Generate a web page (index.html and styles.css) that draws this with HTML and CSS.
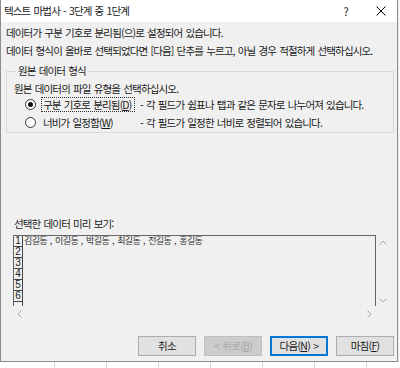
FILE: index.html
```html
<!DOCTYPE html>
<html lang="ko">
<head>
<meta charset="utf-8">
<title>텍스트 마법사</title>
<link rel="stylesheet" href="styles.css">
</head>
<body>
<div class="window">
  <div class="titlebar">
    <span class="title">텍스트 마법사 - 3단계 중 1단계</span>
    <span class="help">?</span>
    <span class="close"><svg width="10" height="10" viewBox="0 0 10 10"><path d="M0.5 0.5L9.5 9.5M9.5 0.5L0.5 9.5" stroke="#000" stroke-width="1" fill="none"/></svg></span>
  </div>
  <div class="content">
    <div class="line">데이터가 구분 기호로 분리됨(으)로 설정되어 있습니다.</div>
    <div class="line">데이터 형식이 올바로 선택되었다면 [다음] 단추를 누르고, 아닐 경우 적절하게 선택하십시오.</div>
    <fieldset class="group">
      <legend>원본 데이터 형식</legend>
      <div class="prompt">원본 데이터의 파일 유형을 선택하십시오.</div>
      <div class="opt">
        <span class="radio checked"></span>
        <span class="label focus">구분 기호로 분리됨(<u>D</u>)</span>
        <span class="desc">- 각 필드가 쉼표나 탭과 같은 문자로 나누어져 있습니다.</span>
      </div>
      <div class="opt">
        <span class="radio"></span>
        <span class="label">너비가 일정함(<u>W</u>)</span>
        <span class="desc">- 각 필드가 일정한 너비로 정렬되어 있습니다.</span>
      </div>
    </fieldset>
    <div class="preview-label">선택한 데이터 미리 보기:</div>
    <div class="preview">
      <div class="data">
        <div class="row"><span class="num">1</span><span class="txt">김길동<span class="c">,</span>이길동<span class="c">,</span>박길동<span class="c">,</span>최길동<span class="c">,</span>전길동<span class="c">,</span>홍길동</span></div>
        <div class="row"><span class="num">2</span><span class="txt"></span></div>
        <div class="row"><span class="num">3</span><span class="txt"></span></div>
        <div class="row"><span class="num">4</span><span class="txt"></span></div>
        <div class="row"><span class="num">5</span><span class="txt"></span></div>
        <div class="row"><span class="num">6</span><span class="txt"></span></div>
        <div class="row"><span class="num"></span><span class="txt"></span></div>
      </div>
      <div class="vscroll">
        <svg width="8" height="5" viewBox="0 0 8 5"><polyline points="0.5,4.5 4,1 7.5,4.5" fill="none" stroke="#a6a6a6" stroke-width="1"/></svg>
        <svg width="8" height="5" viewBox="0 0 8 5"><polyline points="0.5,0.5 4,4 7.5,0.5" fill="none" stroke="#a6a6a6" stroke-width="1"/></svg>
      </div>
      <div class="hscroll">
        <svg width="5" height="8" viewBox="0 0 5 8"><polyline points="4.5,0.5 1,4 4.5,7.5" fill="none" stroke="#a6a6a6" stroke-width="1"/></svg>
        <svg width="5" height="8" viewBox="0 0 5 8"><polyline points="0.5,0.5 4,4 0.5,7.5" fill="none" stroke="#a6a6a6" stroke-width="1"/></svg>
      </div>
      <div class="corner"></div>
    </div>
    <div class="buttons">
      <button class="btn">취소</button>
      <button class="btn disabled">&lt; 뒤로(<u>B</u>)</button>
      <button class="btn default">다음(<u>N</u>) &gt;</button>
      <button class="btn">마침(<u>F</u>)</button>
    </div>
  </div>
</div>
<div class="sheet"></div>
</body>
</html>
```
FILE: styles.css
```css
* { box-sizing: border-box; }
html, body { margin: 0; padding: 0; }
body {
  width: 400px;
  height: 368px;
  background: #ffffff;
  overflow: hidden;
  font-family: "Noto Sans CJK KR", "Noto Sans", sans-serif;
  font-size: 10.5px;
  letter-spacing: -0.85px;
  word-spacing: 1px;
  color: #1a1a1a;
}
.window {
  width: 398px;
  height: 362px;
  border: 1px solid #8c8c8c;
  border-top: none;
  background: #f0f0f0;
  display: flex;
  flex-direction: column;
  box-shadow: 0 1px 2px rgba(0,0,0,0.25);
}
.titlebar {
  height: 22px;
  background: #ffffff;
  display: flex;
  align-items: center;
  padding-left: 3px;
  flex: none;
}
.title { flex: 1; line-height: 20px; }
.help { width: 10px; text-align: center; margin-right: 25px; font-size: 11px; letter-spacing: 0; }
.close { width: 10px; height: 10px; margin-right: 11px; display: flex; }
.content {
  padding: 2px 3px 0 5px;
  flex: 1;
  display: flex;
  flex-direction: column;
}
.line { height: 18px; line-height: 18px; white-space: nowrap; }
.group {
  margin: 4px 0 0 0;
  padding: 4px 0 1px 7px;
  border: 1px solid #dadada;
  height: 69px;
  min-width: 0;
}
.group legend {
  padding: 0 2px;
  margin-left: 2px;
  line-height: 14px;
  height: 14px;
}
.prompt { height: 13px; line-height: 13px; }
.opt {
  height: 18px;
  display: flex;
  align-items: center;
  white-space: nowrap;
}
.radio {
  width: 11px;
  height: 11px;
  border: 1px solid #333;
  border-radius: 50%;
  background: #fff;
  margin-left: 11px;
  margin-right: 6px;
  display: flex;
  align-items: center;
  justify-content: center;
  flex: none;
}
.radio.checked::after {
  content: "";
  width: 5px;
  height: 5px;
  border-radius: 50%;
  background: #111;
}
.label {
  width: 98px;
  line-height: 13px;
  padding-left: 1px;
  flex: none;
}
.label.focus {
  outline: 1px dotted #333;
  outline-offset: 0;
  width: 92px;
  margin-right: 6px;
}
.preview-label {
  margin-top: 84px;
  padding-left: 8px;
  height: 14px;
  line-height: 14px;
}
.preview {
  margin: 4px 0 0 7px;
  display: grid;
  grid-template-columns: 363px 12px;
  grid-template-rows: 71px 14px;
  width: 375px;
}
.data {
  border: 1px solid #666;
  border-bottom: none;
  overflow: hidden;
}
.row {
  height: 11px;
  display: flex;
  align-items: stretch;
}
.num {
  width: 9px;
  border-right: 1px solid #444;
  border-bottom: 1px solid #444;
  font-family: "Liberation Sans", sans-serif;
  font-size: 10px;
  letter-spacing: 0;
  line-height: 10px;
  text-align: center;
  color: #222;
  flex: none;
}
.txt {
  font-size: 9px;
  letter-spacing: -0.6px;
  word-spacing: 0;
  line-height: 10px;
  padding-left: 1px;
  white-space: nowrap;
  color: #333;
}
.c { display: inline-block; width: 8px; text-align: center; letter-spacing: 0; }
.vscroll {
  display: flex;
  flex-direction: column;
  justify-content: space-between;
  align-items: center;
  padding: 5px 0 3px 2px;
}
.hscroll {
  display: flex;
  justify-content: space-between;
  align-items: center;
  padding: 2px 4px 0 4px;
}
.buttons {
  margin-top: 16px;
  display: flex;
  justify-content: flex-end;
  gap: 8px;
}
.btn {
  width: 58px;
  height: 20px;
  background: #e1e1e1;
  border: 1px solid #adadad;
  font-family: inherit;
  font-size: 10.5px;
  letter-spacing: -0.7px;
  word-spacing: 1px;
  color: #1a1a1a;
  padding: 0;
  line-height: 18px;
}
.btn.disabled { background: #cccccc; border-color: #bfbfbf; color: #a6a6a6; }
.btn.default { border: 2px solid #0078d7; line-height: 16px; }
.sheet {
  height: 6px;
  width: 400px;
  background-color: #fff;
  background-image: repeating-linear-gradient(to right, transparent 0, transparent 51px, #d4d4d4 51px, #d4d4d4 52px);
  background-position: 3px 0;
}
```
